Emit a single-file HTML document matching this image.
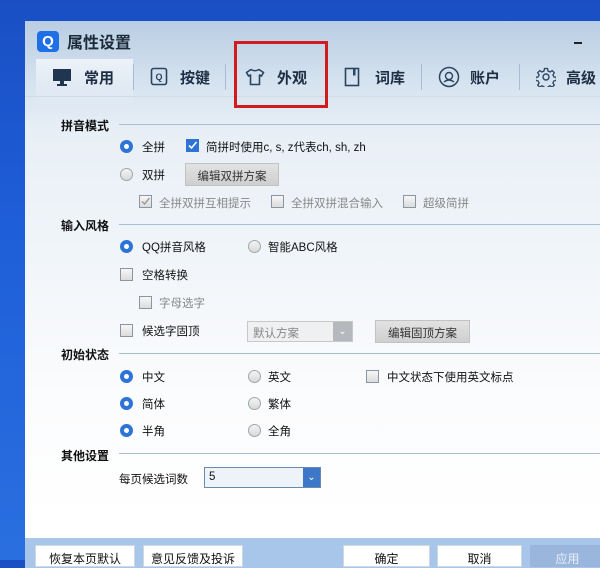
<!DOCTYPE html><html><head><meta charset="utf-8"><style>
*{margin:0;padding:0;box-sizing:border-box}
body{width:600px;height:560px;overflow:hidden;position:relative;background:linear-gradient(180deg,#1a4fc4 0%,#1e5ed8 40%,#2a6fe0 100%);font-family:"Liberation Sans","Noto Sans CJK SC",sans-serif;font-size:12px;color:#111}
#win{position:absolute;left:25px;top:21px;width:580px;height:545px;background:linear-gradient(180deg,#b9cde3 0px,#d5e2ef 60px,#e8eff6 110px,#f2f6fa 250px,#fbfcfd 380px,#fff 500px);}
.abs{position:absolute}
.tt{font-size:16px;font-weight:bold;color:#1c2a3a}
.tab{position:absolute;top:39px;height:34px;font-size:15px;font-weight:bold;color:#1e2e44;display:flex;align-items:center}
.sep{position:absolute;top:43px;width:1px;height:26px;background:#a9bbd0}
.sec{position:absolute;left:36px;font-weight:bold;font-size:12px;color:#111}
.line{position:absolute;left:94px;right:0;height:1px;background:#a8bed6}
.rd{position:absolute;width:13px;height:13px;border-radius:50%;}
.on{background:#fff;border:4px solid #2d74d6}
.off{background:linear-gradient(#f4f4f4,#d8d8d8);border:1px solid #9aa}
.cb{position:absolute;width:13px;height:13px;border:1px solid #8a96a4;background:linear-gradient(#f6f6f6,#dcdcdc)}
.t{position:absolute;font-size:11.5px;white-space:nowrap}
.g{color:#888}
.btn{position:absolute;background:linear-gradient(#e2e2e2,#cfcfcf);border:1px solid #c2c2c2;font-size:11.5px;color:#333;text-align:center}
.bb{position:absolute;top:545px;height:22px;background:#fff;border:1px solid #d0d8e2;text-align:center;font-size:12px;padding-top:4px}
</style></head><body>
<div id="win">
<div class="abs" style="left:12px;top:10px;width:22px;height:21px;background:#1f6fe6;border-radius:4px;color:#fff;font-weight:bold;font-size:15px;text-align:center;line-height:21px">Q</div>
<div class="abs tt" style="left:42px;top:8px">属性设置</div>
<div class="abs" style="left:549px;top:21px;width:8px;height:2px;background:#222"></div>
<div class="abs" style="left:11px;top:38px;width:97px;height:50px;background:linear-gradient(#eef3f9,rgba(238,243,249,0))"></div>
<div class="tab" style="left:27px"><svg width="20" height="20" viewBox="0 0 20 20"><rect x="1" y="2" width="18" height="12" fill="#1f3550"/><rect x="8" y="14" width="4" height="3" fill="#1f3550"/><rect x="5" y="17" width="10" height="2" fill="#1f3550"/></svg><span style="margin-left:12px">常用</span></div>
<div class="sep" style="left:108px"></div>
<div class="tab" style="left:125px"><svg width="18" height="20" viewBox="0 0 18 20"><rect x="1.5" y="1.5" width="15" height="16" rx="2" fill="none" stroke="#2a4563" stroke-width="1.6"/><text x="9" y="13" font-size="9" text-anchor="middle" fill="#2a4563" font-family="Liberation Sans">Q</text></svg><span style="margin-left:12px">按键</span></div>
<div class="sep" style="left:200px"></div>
<div class="tab" style="left:220px"><svg width="20" height="18" viewBox="0 0 20 18"><path d="M6 1.5 L1.5 4.5 L3.5 8 L5.5 7 V16.5 H14.5 V7 L16.5 8 L18.5 4.5 L14 1.5 Q10 4 6 1.5Z" fill="none" stroke="#2a4563" stroke-width="1.6" stroke-linejoin="round"/></svg><span style="margin-left:12px">外观</span></div>
<div class="tab" style="left:319px"><svg width="16" height="20" viewBox="0 0 16 20"><rect x="1.5" y="1.5" width="13" height="17" fill="none" stroke="#2a4563" stroke-width="1.6"/><rect x="9" y="1.5" width="2.5" height="7" fill="#2a4563"/></svg><span style="margin-left:15px">词库</span></div>
<div class="sep" style="left:396px"></div>
<div class="tab" style="left:413px"><svg width="22" height="22" viewBox="0 0 22 22"><circle cx="11" cy="11" r="9.5" fill="none" stroke="#2a4563" stroke-width="1.5"/><circle cx="11" cy="10" r="3.5" fill="none" stroke="#2a4563" stroke-width="1.4"/><path d="M6 16 Q11 12 16 16" fill="none" stroke="#2a4563" stroke-width="1.4"/></svg><span style="margin-left:10px">账户</span></div>
<div class="sep" style="left:494px"></div>
<div class="tab" style="left:511px"><svg width="20" height="20" viewBox="0 0 20 20"><circle cx="10" cy="10" r="3" fill="none" stroke="#2a4563" stroke-width="1.4"/><path d="M8.5 1.5h3l.5 2.5 2 1 2.2-1.4 2.1 2.1-1.4 2.2 1 2 2.5.5v3l-2.5.5-1 2 1.4 2.2-2.1 2.1-2.2-1.4-2 1-.5 2.5h-3l-.5-2.5-2-1-2.2 1.4-2.1-2.1 1.4-2.2-1-2-2.5-.5v-3l2.5-.5 1-2-1.4-2.2 2.1-2.1 2.2 1.4 2-1z" fill="none" stroke="#2a4563" stroke-width="1.3"/></svg><span style="margin-left:10px">高级</span></div>
<div class="abs" style="left:0;top:75px;width:580px;height:1px;background:#c5d3e2;opacity:.6"></div>
</div>
<div class="abs" style="left:234px;top:41px;width:94px;height:67px;border:3px solid #d01c1c"></div>

<div class="sec" style="top:117px;left:61px">拼音模式</div><div class="line" style="left:119px;top:124px"></div>
<div class="rd on" style="left:120px;top:140px"></div><div class="t" style="left:142px;top:139px">全拼</div>
<div class="cb" style="left:186px;top:139px;background:#2d74d6;border-color:#2d74d6"><svg width="11" height="11" viewBox="0 0 11 11" style="position:absolute;left:0;top:0"><path d="M2 5.5 L4.5 8 L9.5 2" stroke="#fff" stroke-width="1.6" fill="none"/></svg></div><div class="t" style="left:206px;top:139px">简拼时使用c, s, z代表ch, sh, zh</div>
<div class="rd off" style="left:120px;top:168px"></div><div class="t" style="left:142px;top:167px">双拼</div>
<div class="btn" style="left:185px;top:163px;width:94px;height:23px;padding-top:4px">编辑双拼方案</div>
<div class="cb" style="left:139px;top:195px"><svg width="11" height="11" viewBox="0 0 11 11" style="position:absolute;left:0;top:0"><path d="M2 5.5 L4.5 8 L9.5 2" stroke="#999" stroke-width="1.4" fill="none"/></svg></div><div class="t g" style="left:159px;top:195px">全拼双拼互相提示</div>
<div class="cb" style="left:271px;top:195px"></div><div class="t g" style="left:291px;top:195px">全拼双拼混合输入</div>
<div class="cb" style="left:403px;top:195px"></div><div class="t g" style="left:423px;top:195px">超级简拼</div>

<div class="sec" style="top:217px;left:61px">输入风格</div><div class="line" style="left:119px;top:224px"></div>
<div class="rd on" style="left:120px;top:240px"></div><div class="t" style="left:142px;top:239px">QQ拼音风格</div>
<div class="rd off" style="left:248px;top:240px"></div><div class="t" style="left:268px;top:239px">智能ABC风格</div>
<div class="cb" style="left:120px;top:268px"></div><div class="t" style="left:142px;top:267px">空格转换</div>
<div class="cb" style="left:139px;top:296px"></div><div class="t g" style="left:159px;top:295px">字母选字</div>
<div class="cb" style="left:120px;top:324px"></div><div class="t" style="left:142px;top:323px">候选字固顶</div>
<div class="abs" style="left:247px;top:321px;width:106px;height:21px;background:#eef0f2;border:1px solid #c8c8c8"></div><div class="t g" style="left:253px;top:325px">默认方案</div><div class="abs" style="left:333px;top:322px;width:19px;height:19px;background:#b5b9be;color:#fff;text-align:center;font-size:10px;line-height:19px">⌄</div>
<div class="btn" style="left:375px;top:320px;width:95px;height:23px;padding-top:4px">编辑固顶方案</div>

<div class="sec" style="top:346px;left:61px">初始状态</div><div class="line" style="left:119px;top:353px"></div>
<div class="rd on" style="left:120px;top:370px"></div><div class="t" style="left:142px;top:369px">中文</div>
<div class="rd off" style="left:248px;top:370px"></div><div class="t" style="left:268px;top:369px">英文</div>
<div class="cb" style="left:366px;top:370px"></div><div class="t" style="left:387px;top:369px">中文状态下使用英文标点</div>
<div class="rd on" style="left:120px;top:397px"></div><div class="t" style="left:142px;top:396px">简体</div>
<div class="rd off" style="left:248px;top:397px"></div><div class="t" style="left:268px;top:396px">繁体</div>
<div class="rd on" style="left:120px;top:424px"></div><div class="t" style="left:142px;top:423px">半角</div>
<div class="rd off" style="left:248px;top:424px"></div><div class="t" style="left:268px;top:423px">全角</div>

<div class="sec" style="top:447px;left:61px">其他设置</div><div class="line" style="left:119px;top:453px"></div>
<div class="t" style="left:119px;top:471px">每页候选词数</div>
<div class="abs" style="left:204px;top:467px;width:117px;height:21px;background:#eef3f9;border:1px solid #6b88ad"></div><div class="t" style="left:209px;top:471px">5</div><div class="abs" style="left:303px;top:468px;width:17px;height:19px;background:#3d78c8;color:#fff;text-align:center;font-size:10px;line-height:19px">⌄</div>

<div class="abs" style="left:25px;top:538px;width:580px;height:30px;background:#a8c6ea"></div>
<div class="bb" style="left:35px;width:100px">恢复本页默认</div>
<div class="bb" style="left:143px;width:100px">意见反馈及投诉</div>
<div class="bb" style="left:343px;width:87px">确定</div>
<div class="bb" style="left:437px;width:85px">取消</div>
<div class="bb" style="left:530px;width:75px;background:#9ab6dc;border-color:#9ab6dc;color:#e8f0fa">应用</div>
</body></html>
